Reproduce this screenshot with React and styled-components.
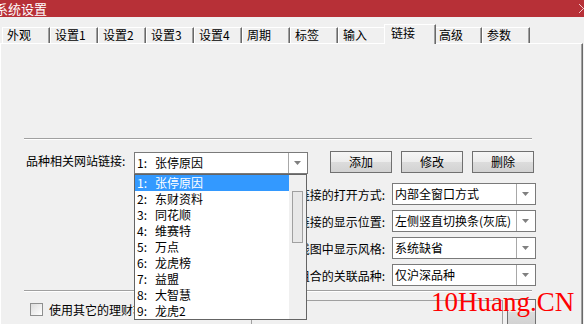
import React from 'react'
import styled, { createGlobalStyle } from 'styled-components'

const GlobalStyle = createGlobalStyle`
  html, body {
    margin: 0;
    padding: 0;
    background: #f0f0f0;
  }
  body {
    font-family: 'Noto Sans CJK SC', 'Noto Sans', sans-serif;
    font-size: 12px;
    color: #000;
  }
`;

const Window = styled.div`
  position: relative;
  width: 584px;
  height: 324px;
  overflow: hidden;
  background: #f0f0f0;
  display: flex;
  flex-direction: column;
`;

const TitleBar = styled.div`
  flex: none;
  height: 17px;
  background: #b73037;
  display: flex;
  align-items: center;
  justify-content: space-between;
`;

const Title = styled.span`
  margin-left: -5px;
  color: #ffffff;
  font-size: 13px;
  line-height: 17px;
  white-space: nowrap;
`;

const TabStrip = styled.div`
  flex: none;
  height: 26px;
  display: flex;
  align-items: flex-end;
  padding-left: 2px;
  position: relative;
  z-index: 1;
`;

const Tab = styled.div`
  box-sizing: border-box;
  position: relative;
  z-index: ${p => (p.$active ? 2 : 1)};
  width: ${p => (p.$active ? 52 : 48)}px;
  height: ${p => (p.$active ? 20 : 16)}px;
  margin: 0 ${p => (p.$active ? -2 : 0)}px ${p => (p.$active ? -1 : 0)}px;
  padding-left: ${p => (p.$active ? 6 : 4)}px;
  border-top: 1px solid #ffffff;
  border-left: 1px solid #ffffff;
  border-right: 1px solid #696969;
  box-shadow: inset -1px 0 #a0a0a0;
  background: #f0f0f0;
  line-height: ${p => (p.$active ? 16 : 14)}px;
  white-space: nowrap;
`;

const Panel = styled.div`
  flex: 1;
  box-sizing: border-box;
  width: 583px;
  padding-left: 23px;
  border-top: 1px solid #ffffff;
  border-left: 1px solid #ffffff;
  border-right: 1px solid #696969;
  box-shadow: inset -1px 0 #a0a0a0;
  display: flex;
  flex-direction: column;
`;

const Separator = styled.div`
  width: 508px;
  height: 0;
  margin-top: ${p => p.$top}px;
  border-top: 1px solid #a0a0a0;
  border-bottom: 1px solid #ffffff;
`;

const LinkRow = styled.div`
  display: flex;
  align-items: flex-start;
  margin-top: 11px;
  padding-left: 2px;
`;

const FieldLabel = styled.div`
  width: 108px;
  line-height: 20px;
  white-space: nowrap;
`;

const ComboWrap = styled.div`
  position: relative;
  margin-top: 1px;
`;

const ComboBox = styled.div`
  box-sizing: border-box;
  width: ${p => p.$w}px;
  height: 22px;
  border: 1px solid #7a7a7a;
  background: #ffffff;
  display: flex;
`;

const ComboText = styled.div`
  flex: 1;
  padding-left: 2px;
  line-height: 20px;
  white-space: nowrap;
  overflow: hidden;
`;

const ComboArrow = styled.div`
  width: 18px;
  border-left: 1px solid #a8a8a8;
  display: flex;
  align-items: center;
  justify-content: center;
`;

const Num = styled.span`
  display: inline-block;
  width: 18px;
`;

const ButtonGroup = styled.div`
  display: flex;
  gap: 9px;
  margin-left: 22px;
`;

const PushButton = styled.div`
  box-sizing: border-box;
  width: ${p => p.$w || 62}px;
  height: ${p => p.$h || 22}px;
  border: 1px solid #707070;
  background: linear-gradient(#f6f6f6 0%, #ececec 50%, #dcdcdc 51%, #d2d2d2 100%);
  display: flex;
  align-items: center;
  justify-content: center;
  line-height: 20px;
`;

const DropList = styled.div`
  position: absolute;
  top: 100%;
  left: 0;
  z-index: 5;
  box-sizing: border-box;
  width: 173px;
  height: 146px;
  border: 1px solid #646464;
  background: #ffffff;
  display: flex;
`;

const Items = styled.div`
  width: 154px;
`;

const Item = styled.div`
  height: 16px;
  line-height: 16px;
  padding-left: 2px;
  white-space: nowrap;
  background: ${p => (p.$selected ? '#3399ff' : 'transparent')};
  color: ${p => (p.$selected ? '#ffffff' : '#000000')};
`;

const ScrollTrack = styled.div`
  flex: 1;
  background: #f0f0f0;
  padding: 16px 0 0 3px;
`;

const Thumb = styled.div`
  box-sizing: border-box;
  width: 11px;
  height: 52px;
  border: 1px solid #a0a0a0;
  background: #e8e8e8;
`;

const Options = styled.div`
  display: flex;
  flex-direction: column;
  gap: 5px;
  margin-top: 9px;
`;

const OptionRow = styled.div`
  width: 512px;
  display: flex;
  justify-content: flex-end;
  align-items: center;
`;

const OptionLabel = styled.div`
  margin-right: 7px;
  white-space: nowrap;
`;

const BottomRow = styled.div`
  width: 512px;
  display: flex;
  align-items: flex-start;
  margin-top: 7px;
`;

const CheckBox = styled.div`
  box-sizing: border-box;
  width: 13px;
  height: 13px;
  margin: 4px 0 0 6px;
  border: 1px solid #8e8f8f;
  background: linear-gradient(135deg, #dcdcdc, #ffffff);
`;

const CheckLabel = styled.div`
  margin-left: 6px;
  line-height: 21px;
  white-space: nowrap;
`;

const EditBox = styled.div`
  box-sizing: border-box;
  width: 252px;
  height: 26px;
  margin: 1px 0 0 auto;
  border: 1px solid #a0a0a0;
  background: #f0f0f0;
`;

const Watermark = styled.div`
  position: absolute;
  left: 431px;
  top: 289px;
  z-index: 10;
  font-family: 'Liberation Serif', 'Times New Roman', serif;
  font-size: 27px;
  line-height: 27px;
  color: #ff0000;
  white-space: nowrap;
`;

const Arrow = () => (
  <svg width="8" height="4" viewBox="0 0 8 4">
    <path d="M0 0H7L3.5 4Z" fill="#808080" />
  </svg>
)

const Combo = ({ w, children }) => (
  <ComboBox $w={w}>
    <ComboText>{children}</ComboText>
    <ComboArrow><Arrow /></ComboArrow>
  </ComboBox>
)

const tabs = ['外观', '设置1', '设置2', '设置3', '设置4', '周期', '标签', '输入', '链接', '高级', '参数']

const sites = ['张停原因', '东财资料', '同花顺', '维赛特', '万点', '龙虎榜', '益盟', '大智慧', '龙虎2']

const options = [
  ['网站链接的打开方式:', '内部全窗口方式'],
  ['网站链接的显示位置:', '左侧竖直切换条(灰底)'],
  ['在K线图中显示风格:', '系统缺省'],
  ['板块组合的关联品种:', '仅沪深品种'],
]

export default function App() {
  return (
    <Window>
      <GlobalStyle />
      <TitleBar>
        <Title>系统设置</Title>
        <svg width="6" height="17" viewBox="0 0 6 17">
          <path d="M1 4L10 13M10 4L1 13" stroke="#f2c6c8" strokeWidth="1" />
        </svg>
      </TitleBar>
      <TabStrip>
        {tabs.map(t => (
          <Tab key={t} $active={t === '链接'}>{t}</Tab>
        ))}
      </TabStrip>
      <Panel>
        <Separator $top={94} />
        <LinkRow>
          <FieldLabel>品种相关网站链接:</FieldLabel>
          <ComboWrap>
            <Combo w={174}><Num>1:</Num>张停原因</Combo>
            <DropList>
              <Items>
                {sites.map((s, i) => (
                  <Item key={s} $selected={i === 0}><Num>{i + 1}:</Num>{s}</Item>
                ))}
              </Items>
              <ScrollTrack><Thumb /></ScrollTrack>
            </DropList>
          </ComboWrap>
          <ButtonGroup>
            <PushButton>添加</PushButton>
            <PushButton>修改</PushButton>
            <PushButton>删除</PushButton>
          </ButtonGroup>
        </LinkRow>
        <Options>
          {options.map(([label, value]) => (
            <OptionRow key={label}>
              <OptionLabel>{label}</OptionLabel>
              <Combo w={144}>{value}</Combo>
            </OptionRow>
          ))}
        </Options>
        <Separator $top={4} />
        <BottomRow>
          <CheckBox />
          <CheckLabel>使用其它的理财软件</CheckLabel>
          <EditBox />
          <PushButton $w={29} $h={26} style={{ marginLeft: 4 }} />
        </BottomRow>
      </Panel>
      <Watermark>10Huang.CN</Watermark>
    </Window>
  )
}
